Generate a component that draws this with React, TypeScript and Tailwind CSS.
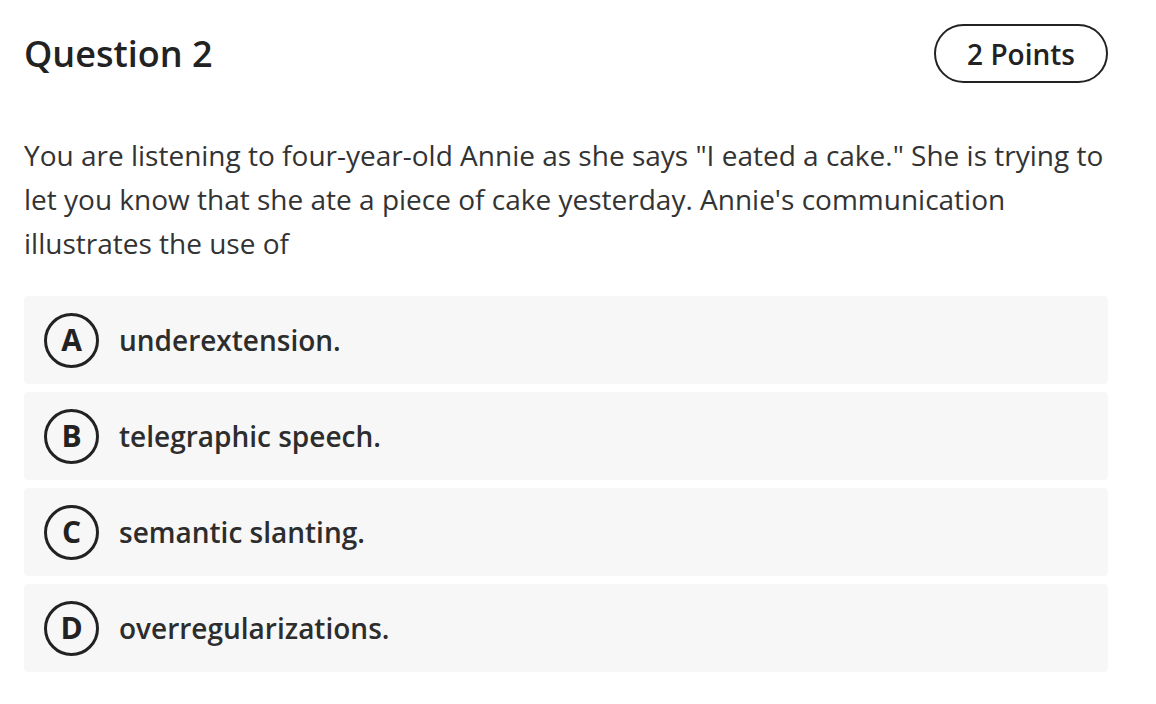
const options = [
  { key: "A", label: "underextension." },
  { key: "B", label: "telegraphic speech." },
  { key: "C", label: "semantic slanting." },
  { key: "D", label: "overregularizations." },
];

export default function App() {
  return (
    <div
      className="min-h-screen bg-white pt-6 pr-12 pb-6 pl-6 text-[#2d2d2d]"
      style={{ fontFamily: '"Open Sans", "Noto Sans", sans-serif' }}
    >
      <header className="flex items-center justify-between">
        <h1 className="text-[36px] font-semibold leading-none text-[#222]">
          Question 2
        </h1>
        <span className="inline-flex h-[59px] items-center justify-center rounded-full border-2 border-[#222] px-[31px] text-[28px] font-semibold text-[#222]">
          2 Points
        </span>
      </header>

      <p className="mt-[50px] text-[28px] leading-[44px] text-[#333]">
        You are listening to four-year-old Annie as she says "I eated a cake."
        She is trying to let you know that she ate a piece of cake yesterday.
        Annie's communication illustrates the use of
      </p>

      <ul className="mt-[31px] flex flex-col gap-2">
        {options.map((option) => (
          <li
            key={option.key}
            className="flex h-[88px] items-center gap-5 rounded-[4px] bg-[#f7f7f7] px-5"
          >
            <span className="inline-flex h-[55px] w-[55px] shrink-0 items-center justify-center rounded-full border-[3px] border-[#222] text-[30px] font-bold leading-none text-[#222]">
              {option.key}
            </span>
            <span className="text-[28px] font-semibold text-[#2d2d2d]">
              {option.label}
            </span>
          </li>
        ))}
      </ul>
    </div>
  );
}
